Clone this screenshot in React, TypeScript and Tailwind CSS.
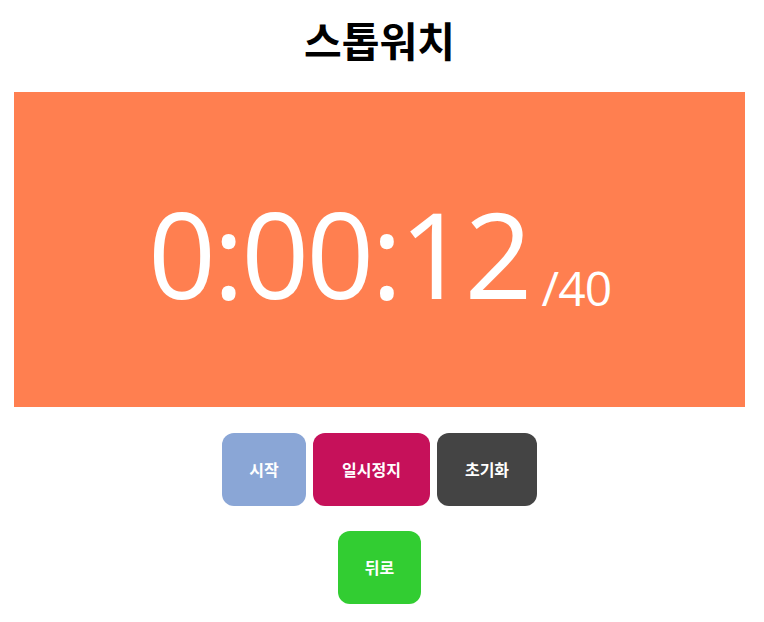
export default function App() {
  return (
    <div className="min-h-screen bg-white font-['Open_Sans','Noto_Sans_CJK_KR',sans-serif]">
      <div className="w-[759px]">
        <h1 className="pt-[16px] text-center text-[41px] font-bold leading-[50px] text-black">
          스톱워치
        </h1>
        <div className="mx-[14px] mt-[26px] flex h-[315px] items-end justify-center bg-[#ff7f50] pb-[94px] text-white">
          <span className="text-[119px] leading-none font-normal tracking-[-3px]">0:00:12</span>
          <span className="ml-[12px] mb-[1px] text-[48px] leading-none tracking-[-1px]">/40</span>
        </div>
        <div className="mt-[26px] flex justify-center gap-[7px]">
          <button className="h-[73px] w-[84px] rounded-[12px] bg-[#8aa6d6] text-[16px] font-bold text-white">
            시작
          </button>
          <button className="h-[73px] w-[117px] rounded-[12px] bg-[#c6115a] text-[16px] font-bold text-white">
            일시정지
          </button>
          <button className="h-[73px] w-[100px] rounded-[12px] bg-[#444444] text-[16px] font-bold text-white">
            초기화
          </button>
        </div>
        <div className="mt-[25px] flex justify-center">
          <button className="h-[73px] w-[83px] rounded-[12px] bg-[#32cd32] text-[16px] font-bold text-white">
            뒤로
          </button>
        </div>
      </div>
    </div>
  );
}
